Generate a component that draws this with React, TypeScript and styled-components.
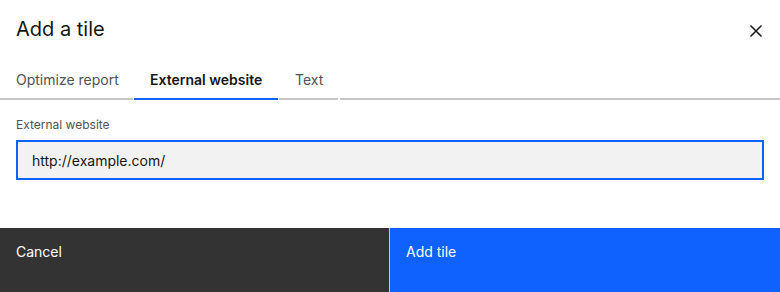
import React from "react";
import styled, { createGlobalStyle } from "styled-components";

const Global = createGlobalStyle`
  html, body { margin: 0; padding: 0; background: #ffffff; }
  body { font-family: Inter, Roboto, "Liberation Sans", sans-serif; color: #161616; }
  * { box-sizing: border-box; }
`;

const Modal = styled.div`
  width: 780px;
  height: 292px;
  display: flex;
  flex-direction: column;
  background: #ffffff;
`;

const Header = styled.div`
  display: flex;
  justify-content: space-between;
  align-items: flex-start;
  padding: 15px 16px 0 16px;
  height: 60px;
`;

const Title = styled.h2`
  margin: 0;
  font-size: 20px;
  line-height: 28px;
  font-weight: 400;
  color: #161616;
`;

const CloseButton = styled.button`
  border: none;
  background: transparent;
  padding: 0;
  margin: 4px -4px 0 0;
  width: 24px;
  height: 24px;
  display: flex;
  align-items: center;
  justify-content: center;
  cursor: pointer;
  color: #161616;
`;

const TabList = styled.div`
  display: flex;
  gap: 1px;
  height: 40px;
`;

const Tab = styled.div<{ $active?: boolean; $w: number }>`
  width: ${(p) => p.$w}px;
  flex: 0 0 auto;
  height: 40px;
  padding: 0 16px;
  display: flex;
  align-items: center;
  font-size: 14px;
  font-weight: ${(p) => (p.$active ? 600 : 400)};
  color: ${(p) => (p.$active ? "#161616" : "#525252")};
  border-bottom: 2px solid ${(p) => (p.$active ? "#0f62fe" : "#c6c6c6")};
  white-space: nowrap;
`;

const Filler = styled.div`
  flex: 1 1 auto;
  margin-left: 1px;
  border-bottom: 2px solid #c6c6c6;
`;

const Body = styled.div`
  padding: 17px 16px 0 16px;
  display: flex;
  flex-direction: column;
  flex: 1 1 auto;
`;

const Label = styled.label`
  font-size: 12px;
  line-height: 16px;
  color: #525252;
  margin-bottom: 7px;
`;

const Input = styled.input`
  width: 748px;
  height: 40px;
  border: 2px solid #0f62fe;
  background: #f2f2f2;
  padding: 0 14px;
  font-family: inherit;
  font-size: 14px;
  color: #161616;
  outline: none;
`;

const Footer = styled.div`
  display: flex;
  height: 64px;
`;

const FooterButton = styled.button<{ $primary?: boolean }>`
  flex: ${(p) => (p.$primary ? "1 1 0" : "0 0 389px")};
  height: 64px;
  border: none;
  margin: 0;
  padding: 15px 16px 0 16px;
  text-align: left;
  display: flex;
  align-items: flex-start;
  font-family: inherit;
  font-size: 14px;
  line-height: 18px;
  color: #ffffff;
  background: ${(p) => (p.$primary ? "#0f62fe" : "#333333")};
  cursor: pointer;
`;

const Divider = styled.div`
  width: 1px;
  background: #c6c6c6;
`;

export default function App() {
  return (
    <>
      <Global />
      <Modal>
        <Header>
          <Title>Add a tile</Title>
          <CloseButton aria-label="Close">
            <svg width="16" height="16" viewBox="0 0 16 16">
              <path d="M2.5 2.5 L13.5 13.5 M13.5 2.5 L2.5 13.5" stroke="#161616" strokeWidth="1.5" fill="none" />
            </svg>
          </CloseButton>
        </Header>
        <TabList>
          <Tab $w={133}>Optimize report</Tab>
          <Tab $w={144} $active>External website</Tab>
          <Tab $w={59}>Text</Tab>
          <Filler />
        </TabList>
        <Body>
          <Label>External website</Label>
          <Input defaultValue="http://example.com/" />
        </Body>
        <Footer>
          <FooterButton>Cancel</FooterButton>
          <Divider />
          <FooterButton $primary>Add tile</FooterButton>
        </Footer>
      </Modal>
    </>
  );
}
